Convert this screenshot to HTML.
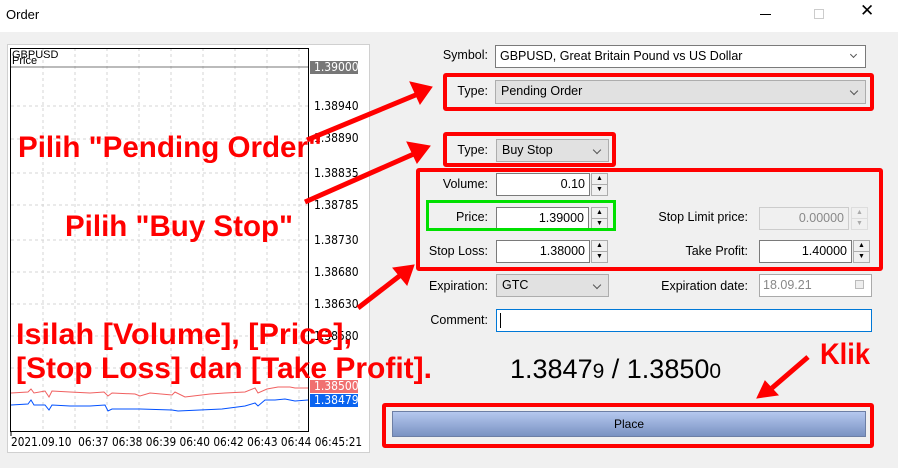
<!DOCTYPE html>
<html><head><meta charset="utf-8"><style>
*{box-sizing:border-box;margin:0;padding:0}
body{width:898px;height:468px;background:#f0f0f0;font-family:"Liberation Sans",sans-serif;font-size:12px;color:#000;position:relative;overflow:hidden}
.a{position:absolute}
.lbl{position:absolute;text-align:right;font-size:12.5px}
.inp{position:absolute;background:#fff;border:1px solid #7a7a7a;font-size:12.5px;text-align:right;padding-right:4px;line-height:21px}
.cmb{position:absolute;background:#e1e1e1;border:1px solid #adadad;font-size:12.5px;padding-left:5px;line-height:21px}
.cmb:after{content:"";position:absolute;right:8px;top:7px;width:5px;height:5px;border-right:1px solid #555;border-bottom:1px solid #555;transform:rotate(45deg)}
.spin{position:absolute;width:17px;border:1px solid #adadad;background:#f0f0f0}
.spin div{height:50%;border-bottom:1px solid #adadad;font-size:7px;text-align:center;line-height:10px}
.spin div:last-child{border-bottom:none}
.red{position:absolute;border:4px solid #f00;border-radius:3px}
.pl{position:absolute;left:314px;font-size:12px;font-family:"DejaVu Sans",sans-serif;transform:scaleX(.9);transform-origin:left}
</style></head><body>
<div class="a" style="left:0;top:0;width:898px;height:32px;background:#fff"></div>
<div class="a" style="left:6px;top:7px;font-size:13px">Order</div>
<div class="a" style="left:760px;top:14px;width:11px;height:1px;background:#000"></div>
<div class="a" style="left:814px;top:9px;width:10px;height:10px;border:1px solid #ccc"></div>
<div class="a" style="left:860px;top:1px;font-size:17px">✕</div>

<div class="a" style="left:7px;top:44px;width:363px;height:409px;border:1px solid #d0d0d0;background:#fff"></div>
<svg class="a" style="left:0;top:0" width="898" height="468">
<g stroke="#d4d4d4" stroke-dasharray="3,3">
<line x1="43" y1="48" x2="43" y2="432"/><line x1="75" y1="48" x2="75" y2="432"/><line x1="107" y1="48" x2="107" y2="432"/><line x1="139" y1="48" x2="139" y2="432"/><line x1="171" y1="48" x2="171" y2="432"/><line x1="203" y1="48" x2="203" y2="432"/><line x1="235" y1="48" x2="235" y2="432"/><line x1="267" y1="48" x2="267" y2="432"/><line x1="299" y1="48" x2="299" y2="432"/>
<line x1="11" y1="106" x2="308" y2="106"/><line x1="11" y1="139" x2="308" y2="139"/><line x1="11" y1="173" x2="308" y2="173"/><line x1="11" y1="205" x2="308" y2="205"/><line x1="11" y1="240" x2="308" y2="240"/><line x1="11" y1="272" x2="308" y2="272"/><line x1="11" y1="304" x2="308" y2="304"/><line x1="11" y1="336" x2="308" y2="336"/><line x1="11" y1="368" x2="308" y2="368"/>
</g>
<rect x="10.5" y="48.5" width="298" height="383" fill="none" stroke="#000"/>
<line x1="11" y1="67" x2="308" y2="67" stroke="#777"/>
<polyline fill="none" stroke="#f06060" points="11,393 28,392 31,389 34,393 45,391 49,397 52,391 70,392 90,393 104,392 108,396 112,393 135,394 140,396 150,393 172,395 175,392 185,397 210,394 225,393 245,392 255,388 258,393 267,389 278,387 290,387 295,388 308,388"/>
<polyline fill="none" stroke="#0050ff" points="11,405 28,404 31,400 34,405 45,405 49,410 52,405 70,406 90,406 105,405 108,411 112,409 130,409 140,409 172,410 178,411 200,410 222,409 245,406 255,403 258,406 265,400 275,400 285,399 295,401 308,400"/>
<line x1="11" y1="432" x2="11" y2="436" stroke="#000"/>
</svg>
<div class="a" style="left:12px;top:50px;font-size:11px;line-height:11px">GBPUSD</div>
<div class="a" style="left:12px;top:56px;font-size:11px;line-height:11px">Price</div>
<div class="a" style="left:310px;top:61px;width:48px;height:13px;background:#777"></div>
<div class="pl" style="top:60px;color:#fff">1.39000</div>
<div class="pl" style="top:99px">1.38940</div>
<div class="pl" style="top:131px">1.38890</div>
<div class="pl" style="top:166px">1.38835</div>
<div class="pl" style="top:198px">1.38785</div>
<div class="pl" style="top:233px">1.38730</div>
<div class="pl" style="top:265px">1.38680</div>
<div class="pl" style="top:297px">1.38630</div>
<div class="pl" style="top:329px">1.38580</div>
<div class="a" style="left:310px;top:380px;width:48px;height:13px;background:#f07070"></div>
<div class="pl" style="top:379px;color:#fff">1.38500</div>
<div class="a" style="left:310px;top:394px;width:48px;height:13px;background:#0a64f0"></div>
<div class="pl" style="top:393px;color:#fff">1.38479</div>
<div class="a" style="left:11px;top:435px;font-size:12px;font-family:'DejaVu Sans',sans-serif;transform:scaleX(.88);transform-origin:left;white-space:nowrap">2021.09.10&nbsp; 06:37 06:38 06:39 06:40 06:42 06:43 06:44 06:45:21</div>

<div class="lbl" style="left:420px;width:68px;top:48px">Symbol:</div>
<div class="inp" style="left:495px;top:45px;width:371px;height:23px;text-align:left;padding-left:4px">GBPUSD, Great Britain Pound vs US Dollar</div>
<div class="a" style="left:851px;top:52px;width:5px;height:5px;border-right:1px solid #555;border-bottom:1px solid #555;transform:rotate(45deg)"></div>
<div class="lbl" style="left:420px;width:68px;top:84px">Type:</div>
<div class="cmb" style="left:495px;top:80px;width:371px;height:24px">Pending Order</div>

<div class="lbl" style="left:420px;width:68px;top:143px">Type:</div>
<div class="cmb" style="left:496px;top:139px;width:113px;height:23px">Buy Stop</div>

<div class="lbl" style="left:400px;width:88px;top:177px">Volume:</div>
<div class="inp" style="left:496px;top:173px;width:94px;height:23px">0.10</div>
<div class="spin" style="left:591px;top:173px;height:23px"><div>▲</div><div>▼</div></div>
<div class="lbl" style="left:400px;width:88px;top:210px">Price:</div>
<div class="inp" style="left:496px;top:207px;width:93px;height:23px">1.39000</div>
<div class="spin" style="left:591px;top:207px;height:23px"><div>▲</div><div>▼</div></div>
<div class="lbl" style="left:400px;width:88px;top:244px">Stop Loss:</div>
<div class="inp" style="left:496px;top:240px;width:94px;height:23px">1.38000</div>
<div class="spin" style="left:591px;top:240px;height:23px"><div>▲</div><div>▼</div></div>

<div class="lbl" style="left:620px;width:128px;top:210px">Stop Limit price:</div>
<div class="inp" style="left:759px;top:207px;width:90px;height:23px;background:#f0f0f0;border-color:#ccc;color:#888">0.00000</div>
<div class="spin" style="left:851px;top:207px;height:23px;border-color:#ddd;color:#aaa"><div style="border-color:#ddd">▲</div><div>▼</div></div>
<div class="lbl" style="left:620px;width:128px;top:244px">Take Profit:</div>
<div class="inp" style="left:759px;top:240px;width:93px;height:23px">1.40000</div>
<div class="spin" style="left:853px;top:240px;height:23px"><div>▲</div><div>▼</div></div>

<div class="lbl" style="left:400px;width:88px;top:279px">Expiration:</div>
<div class="cmb" style="left:496px;top:274px;width:113px;height:23px">GTC</div>
<div class="lbl" style="left:620px;width:128px;top:279px">Expiration date:</div>
<div class="inp" style="left:759px;top:274px;width:113px;height:23px;text-align:left;padding-left:3px;color:#888;border-color:#aaa">18.09.21</div>
<div class="a" style="left:855px;top:280px;width:9px;height:9px;border:1px solid #bbb;background:#eee"></div>
<div class="lbl" style="left:400px;width:88px;top:313px">Comment:</div>
<div class="inp" style="left:496px;top:309px;width:376px;height:23px;border-color:#0078d7"></div>
<div class="a" style="left:500px;top:313px;width:1px;height:15px;background:#000"></div>

<div class="a" style="left:510px;top:354px;font-size:27px;white-space:nowrap">1.3847<span style="font-size:21px">9</span> / 1.3850<span style="font-size:21px">0</span></div>

<div class="a" style="left:392px;top:411px;width:474px;height:26px;border:1px solid #6d7fa5;background:linear-gradient(#b5c8ef,#7a92c2);text-align:center;line-height:24px;font-size:12px">Place</div>

<div class="red" style="left:443px;top:73px;width:431px;height:38px"></div>
<div class="red" style="left:443px;top:132px;width:173px;height:35px"></div>
<div class="red" style="left:416px;top:168px;width:467px;height:103px"></div>
<div class="a" style="left:426px;top:200px;width:190px;height:31px;border:3px solid #00e000"></div>
<div class="red" style="left:382px;top:403px;width:492px;height:45px"></div>

<svg class="a" style="left:0;top:0" width="898" height="468">
<g fill="#f00" stroke="#f00" stroke-width="5">
<line x1="307" y1="140" x2="418" y2="94"/><polygon stroke-width="1" points="432,87 410,82 420,104"/>
<line x1="305" y1="202" x2="416" y2="153"/><polygon stroke-width="1" points="430,146 407,142 417,163"/>
<line x1="358" y1="308" x2="402" y2="274"/><polygon stroke-width="1" points="414,265 393,268 407,285"/>
<line x1="808" y1="357" x2="772" y2="388"/><polygon stroke-width="1" points="757,398 778,395 765,381"/>
</g>
<g fill="#f00" font-family="Liberation Sans,sans-serif" font-weight="bold" font-size="30">
<text x="18" y="157" textLength="304" lengthAdjust="spacingAndGlyphs">Pilih "Pending Order"</text>
<text x="65" y="236" textLength="228" lengthAdjust="spacingAndGlyphs">Pilih "Buy Stop"</text>
<text x="16" y="344" textLength="336" lengthAdjust="spacingAndGlyphs">Isilah [Volume], [Price],</text>
<text x="16" y="378" textLength="416" lengthAdjust="spacingAndGlyphs">[Stop Loss] dan [Take Profit].</text>
<text x="820" y="364" textLength="50" lengthAdjust="spacingAndGlyphs">Klik</text>
</g>
</svg>
</body></html>
